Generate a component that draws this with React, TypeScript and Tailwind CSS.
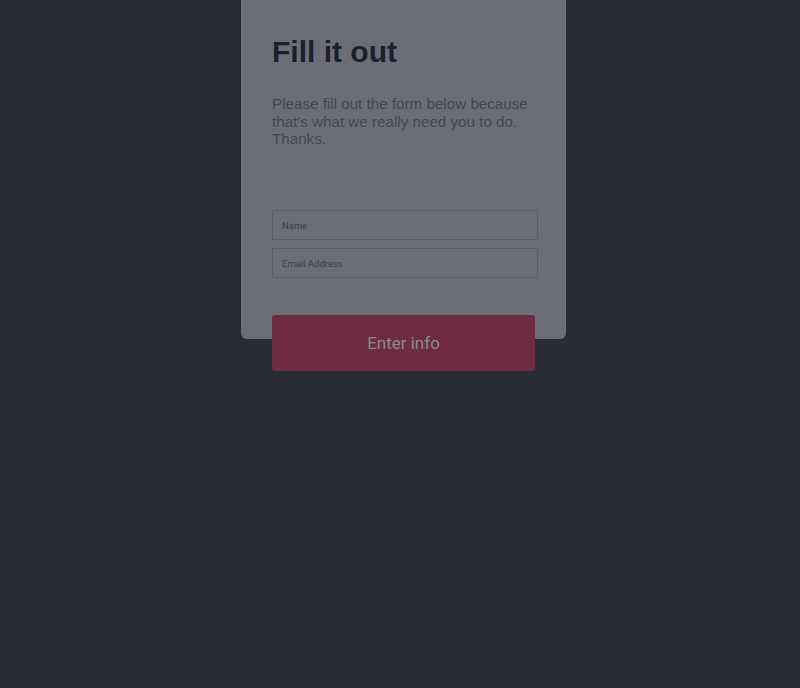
import React from "react";

const App: React.FC = () => {
  return (
    <div className="min-h-[688px] w-full bg-[#292c35] font-['Liberation_Sans',Arial,sans-serif]">
      <div className="flex justify-center pl-[7px]">
        {/* Card */}
        <div className="h-[339px] w-[325px] rounded-b-[6px] bg-[#6b6e76] pl-[31px] pr-[28px]">
          <h1 className="pt-[36px] text-[30px] font-bold leading-[32px] text-[#1d2029]">
            Fill it out
          </h1>
          <p className="mt-[27px] text-[15.2px] leading-[17.5px] text-[#45484f]">
            Please fill out the form below because that's what we really need
            you to do. Thanks.
          </p>

          {/* Fields */}
          <div className="mt-[62px] flex flex-col gap-[8px]">
            <input
              type="text"
              placeholder="Name"
              className="h-[30px] w-full border border-[#5b5e66] bg-transparent px-[9px] pt-[2px] font-['Roboto',sans-serif] text-[9.5px] text-[#3f424a] outline-none placeholder:text-[#3d4048]"
            />
            <input
              type="email"
              placeholder="Email Address"
              className="h-[30px] w-full border border-[#5b5e66] bg-transparent px-[9px] pt-[2px] font-['Roboto',sans-serif] text-[9.5px] text-[#3f424a] outline-none placeholder:text-[#3d4048]"
            />
          </div>

          <button className="mt-[37px] h-[56px] w-[263px] rounded-[3px] bg-[#6f2b40] pt-[2px] font-['Roboto',sans-serif] text-[17px] text-[#888a92]">
            Enter info
          </button>
        </div>
      </div>
    </div>
  );
};

export default App;
